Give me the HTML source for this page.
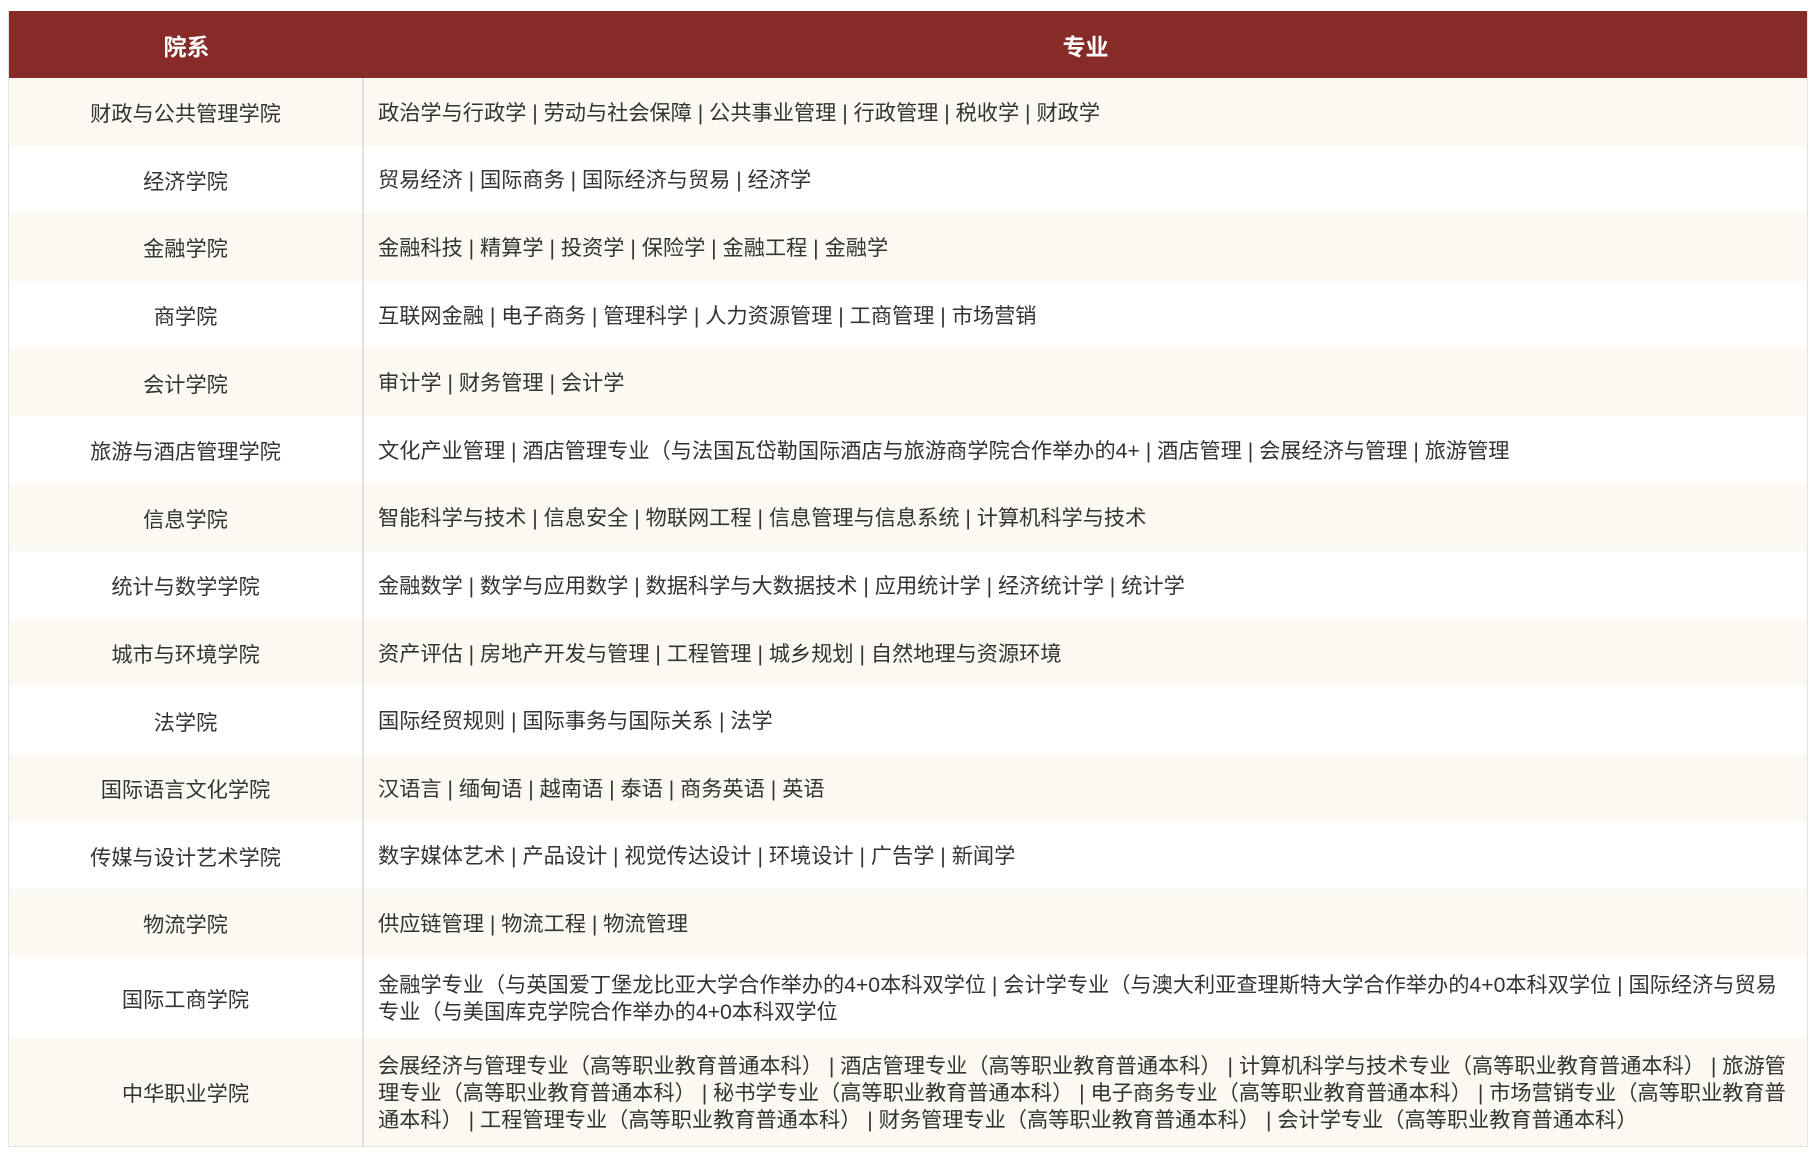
<!DOCTYPE html>
<html><head><meta charset="utf-8"><style>
html,body{margin:0;padding:0;background:#fff;width:1812px;height:1152px;overflow:hidden}
body{font-family:"Liberation Sans","Noto Sans CJK SC",sans-serif;color:#333}
.t{position:absolute;left:8px;top:11px;width:1798px;border:1px solid #e2e2e2;border-top:none}
.h{height:67px;background:#862b27;color:#fff;font-weight:bold;font-size:23px;display:flex;align-items:center}
.h .a{width:355px;text-align:center}
.h .b{flex:1;text-align:center}
.r{display:flex;height:67.6px;font-size:21.2px}
.r:nth-child(even){background:#fcf8f2}
.r:nth-child(odd){background:#fff}
.r .a{width:355px;border-right:2px solid #e0e0e0;display:flex;align-items:center;justify-content:center;padding-top:2px;box-sizing:border-box}
.r .b{flex:1;display:flex;align-items:center;padding-left:14px;padding-top:3px;white-space:nowrap;line-height:27px}
</style></head><body>
<div class="t">
<div class="h"><div class="a">院系</div><div class="b">专业</div></div>
<div class="r"><div class="a">财政与公共管理学院</div><div class="b">政治学与行政学 | 劳动与社会保障 | 公共事业管理 | 行政管理 | 税收学 | 财政学</div></div>
<div class="r"><div class="a">经济学院</div><div class="b">贸易经济 | 国际商务 | 国际经济与贸易 | 经济学</div></div>
<div class="r"><div class="a">金融学院</div><div class="b">金融科技 | 精算学 | 投资学 | 保险学 | 金融工程 | 金融学</div></div>
<div class="r"><div class="a">商学院</div><div class="b">互联网金融 | 电子商务 | 管理科学 | 人力资源管理 | 工商管理 | 市场营销</div></div>
<div class="r"><div class="a">会计学院</div><div class="b">审计学 | 财务管理 | 会计学</div></div>
<div class="r"><div class="a">旅游与酒店管理学院</div><div class="b">文化产业管理 | 酒店管理专业（与法国瓦岱勒国际酒店与旅游商学院合作举办的4+ | 酒店管理 | 会展经济与管理 | 旅游管理</div></div>
<div class="r"><div class="a">信息学院</div><div class="b">智能科学与技术 | 信息安全 | 物联网工程 | 信息管理与信息系统 | 计算机科学与技术</div></div>
<div class="r"><div class="a">统计与数学学院</div><div class="b">金融数学 | 数学与应用数学 | 数据科学与大数据技术 | 应用统计学 | 经济统计学 | 统计学</div></div>
<div class="r"><div class="a">城市与环境学院</div><div class="b">资产评估 | 房地产开发与管理 | 工程管理 | 城乡规划 | 自然地理与资源环境</div></div>
<div class="r"><div class="a">法学院</div><div class="b">国际经贸规则 | 国际事务与国际关系 | 法学</div></div>
<div class="r"><div class="a">国际语言文化学院</div><div class="b">汉语言 | 缅甸语 | 越南语 | 泰语 | 商务英语 | 英语</div></div>
<div class="r"><div class="a">传媒与设计艺术学院</div><div class="b">数字媒体艺术 | 产品设计 | 视觉传达设计 | 环境设计 | 广告学 | 新闻学</div></div>
<div class="r"><div class="a">物流学院</div><div class="b">供应链管理 | 物流工程 | 物流管理</div></div>
<div class="r" style="height:81px"><div class="a">国际工商学院</div><div class="b">金融学专业（与英国爱丁堡龙比亚大学合作举办的4+0本科双学位 | 会计学专业（与澳大利亚查理斯特大学合作举办的4+0本科双学位 | 国际经济与贸易<br>专业（与美国库克学院合作举办的4+0本科双学位</div></div>
<div class="r" style="height:108px"><div class="a">中华职业学院</div><div class="b">会展经济与管理专业（高等职业教育普通本科） | 酒店管理专业（高等职业教育普通本科） | 计算机科学与技术专业（高等职业教育普通本科） | 旅游管<br>理专业（高等职业教育普通本科） | 秘书学专业（高等职业教育普通本科） | 电子商务专业（高等职业教育普通本科） | 市场营销专业（高等职业教育普<br>通本科） | 工程管理专业（高等职业教育普通本科） | 财务管理专业（高等职业教育普通本科） | 会计学专业（高等职业教育普通本科）</div></div>
</div>
</body></html>
